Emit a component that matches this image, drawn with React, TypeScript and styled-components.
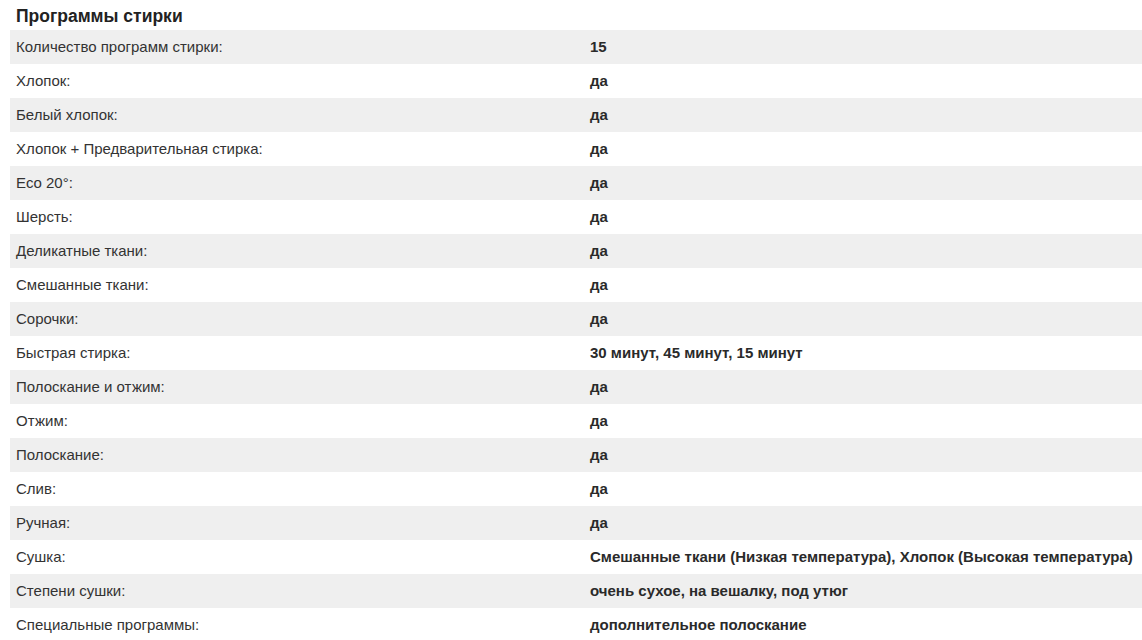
import React from "react";
import styled, { createGlobalStyle } from "styled-components";

const Global = createGlobalStyle`
  html, body { margin: 0; padding: 0; background: #fff; }
  body { font-family: "Liberation Sans", Arial, sans-serif; color: #333; overflow: hidden; }
`;

const Section = styled.section`
  padding-left: 10px;
`;

const Title = styled.h2`
  margin: 0;
  padding: 6px 6px 0;
  height: 30px;
  box-sizing: border-box;
  font-size: 17.5px;
  font-weight: bold;
  line-height: 20px;
  color: #222;
`;

const Table = styled.div`
  display: flex;
  flex-direction: column;
`;

const Row = styled.div<{ $shade: boolean }>`
  display: grid;
  grid-template-columns: 574px 1fr;
  height: 34px;
  box-sizing: border-box;
  padding-bottom: 2px;
  align-items: center;
  background: ${(p) => (p.$shade ? "#efefef" : "#fff")};
  font-size: 15px;
  white-space: nowrap;
`;

const Label = styled.div`
  padding-left: 6px;
  color: #333;
`;

const Value = styled.div`
  padding-left: 6px;
  font-weight: bold;
  color: #2a2a2a;
`;

const rows: [string, string][] = [
  ["Количество программ стирки:", "15"],
  ["Хлопок:", "да"],
  ["Белый хлопок:", "да"],
  ["Хлопок + Предварительная стирка:", "да"],
  ["Eco 20°:", "да"],
  ["Шерсть:", "да"],
  ["Деликатные ткани:", "да"],
  ["Смешанные ткани:", "да"],
  ["Сорочки:", "да"],
  ["Быстрая стирка:", "30 минут, 45 минут, 15 минут"],
  ["Полоскание и отжим:", "да"],
  ["Отжим:", "да"],
  ["Полоскание:", "да"],
  ["Слив:", "да"],
  ["Ручная:", "да"],
  ["Сушка:", "Смешанные ткани (Низкая температура), Хлопок (Высокая температура)"],
  ["Степени сушки:", "очень сухое, на вешалку, под утюг"],
  ["Специальные программы:", "дополнительное полоскание"],
];

export default function App() {
  return (
    <>
      <Global />
      <Section>
        <Title>Программы стирки</Title>
        <Table>
          {rows.map(([l, v], i) => (
            <Row key={i} $shade={i % 2 === 0}>
              <Label>{l}</Label>
              <Value>{v}</Value>
            </Row>
          ))}
        </Table>
      </Section>
    </>
  );
}
